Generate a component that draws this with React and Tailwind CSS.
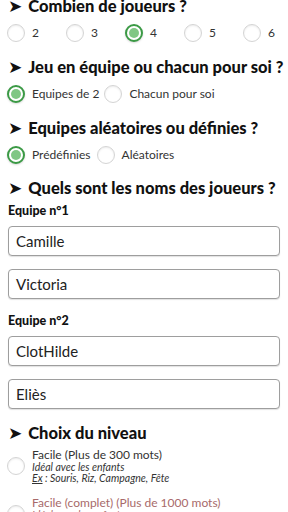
import React from 'react';

const font = { fontFamily: 'Lato, "Noto Sans", sans-serif' };

const Radio = ({ checked }) => (
    <span
        className={
            checked
                ? 'flex-none w-[18px] h-[18px] rounded-full border-2 border-[#3b9a45] bg-white flex items-center justify-center shadow-[0_1px_2px_rgba(0,0,0,0.15)]'
                : 'flex-none w-[18px] h-[18px] rounded-full border border-[#d4d4d4] bg-white shadow-[inset_0_1px_2px_rgba(0,0,0,0.08)]'
        }
    >
        {checked && <span className="w-[10px] h-[10px] rounded-full bg-[#80c784]" />}
    </span>
);

const Heading = ({ children }) => (
    <h2 className="h-[24px] flex items-center px-2 text-[16.5px] font-black text-[#111] whitespace-nowrap">
        <span className="text-[17px] mr-[6px] leading-none" style={{ fontFamily: '"DejaVu Sans", sans-serif' }}>➤</span>
        {children}
    </h2>
);

const Option = ({ checked, label, className = '' }) => (
    <label className={`flex items-center gap-[7px] ${className}`}>
        <Radio checked={checked} />
        <span className="text-[12px] text-[#333]">{label}</span>
    </label>
);

const NameInput = ({ value, className = '' }) => (
    <div className={`mx-2 h-[30px] rounded-[4px] border border-[#9e9e9e] bg-white flex items-center pl-[7px] pr-2 text-[15px] text-[#222] shadow-[0_1px_1px_rgba(0,0,0,0.12)] ${className}`}>
        {value}
    </div>
);

const Level = ({ label, color, className = '' }) => (
    <div className={`flex items-center pl-[7px] gap-[7px] ${className}`}>
        <Radio />
        <div className={color}>
            <div className="text-[12px] leading-[14px]">{label}</div>
            <div className="text-[10.5px] leading-[11px] italic">Idéal avec les enfants</div>
            <div className="text-[10.5px] leading-[11px] italic"><span className="underline">Ex</span> : Souris, Riz, Campagne, Fête</div>
        </div>
    </div>
);

const App = () => {
    return (
        <div className="w-[288px] h-[512px] overflow-hidden bg-white" style={font}>
            <div className="-mt-[6px]">
                <Heading>Combien de joueurs ?</Heading>
                <div className="h-[30px] flex items-center pl-[7px] mb-[7px] overflow-hidden">
                    {['2', '3', '4', '5', '6'].map((n) => (
                        <div key={n} className="w-[59px] flex-none">
                            <Option checked={n === '4'} label={n} />
                        </div>
                    ))}
                </div>

                <Heading>Jeu en équipe ou chacun pour soi ?</Heading>
                <div className="h-[30px] flex items-center pl-[7px] mb-[7px] gap-[5px]">
                    <Option checked label="Equipes de 2" />
                    <Option label="Chacun pour soi" />
                </div>

                <Heading>Equipes aléatoires ou définies ?</Heading>
                <div className="h-[30px] flex items-center pl-[7px] mb-[6px] gap-[6px]">
                    <Option checked label="Prédéfinies" />
                    <Option label="Aléatoires" />
                </div>

                <Heading>Quels sont les noms des joueurs ?</Heading>
                <div className="h-[20px] mt-[1px] flex items-center px-2 text-[12.5px] font-black text-[#111]">Equipe n°1</div>
                <NameInput value="Camille" className="mt-[5px]" />
                <NameInput value="Victoria" className="mt-[13px]" />
                <div className="h-[20px] mt-[12px] flex items-center px-2 text-[12.5px] font-black text-[#111]">Equipe n°2</div>
                <NameInput value="ClotHilde" className="mt-[5px]" />
                <NameInput value="Eliès" className="mt-[13px]" />

                <div className="mt-[12px]">
                    <Heading>Choix du niveau</Heading>
                </div>
                <Level label="Facile (Plus de 300 mots)" color="text-[#333]" className="mt-[3px]" />
                <Level label="Facile (complet) (Plus de 1000 mots)" color="text-[#a86a6a]" className="mt-[12px]" />
            </div>
        </div>
    );
};

export default App;
